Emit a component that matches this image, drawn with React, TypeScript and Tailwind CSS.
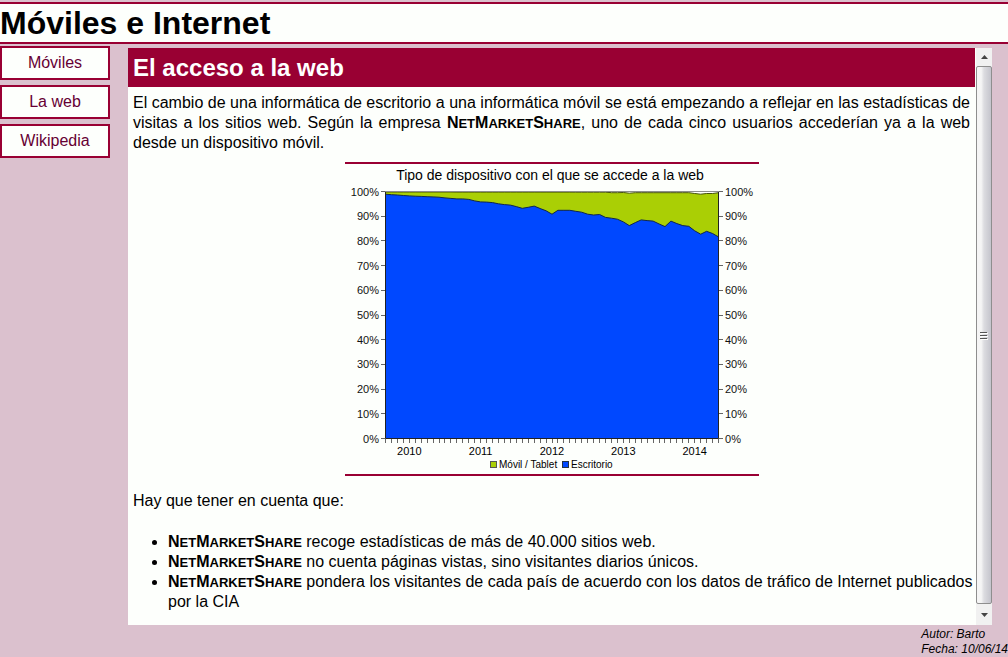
import type { ReactNode } from 'react';

const desktop = [
  98.9, 98.7, 98.6, 98.4, 98.2, 98.1, 98.0, 97.9, 97.8, 97.7, 97.4, 97.2, 97.0, 97.0, 96.8, 96.2, 95.8, 95.7, 95.5,
  95.0, 94.7, 94.5, 93.9, 93.2, 93.6, 94.1, 93.1, 92.2, 90.8, 92.4, 92.4, 92.4, 92.0, 91.6, 90.8, 90.5, 90.7, 89.5,
  89.2, 88.8, 87.7, 86.2, 87.4, 88.5, 88.2, 88.0, 86.9, 85.8, 88.0, 87.0, 86.2, 85.9, 84.1, 82.7, 83.9, 83.0, 81.6,
];
const total = desktop.map((_, i) => {
  if (i < 38) return 99.8 - i * 0.002;
  if (i === 40) return 99.6;
  if (i === 41) return 99.3;
  if (i < 52) return 99.5;
  return [99.2, 98.9, 99.2, 99.2, 99.5][i - 52];
});

const LEFT = 40.5;
const RIGHT = 373.5;
const TOP = 27.5;
const BOTTOM = 274.5;
const px = (i: number) => LEFT + (i * (RIGHT - LEFT)) / 56;
const py = (v: number) => BOTTOM - (v * (BOTTOM - TOP)) / 100;
const line = (values: number[]) => values.map((v, i) => `${px(i).toFixed(1)},${py(v).toFixed(1)}`).join(' ');
const area = (values: number[]) => `${LEFT},${BOTTOM} ${line(values)} ${RIGHT},${BOTTOM}`;

function Chart() {
  const percents = [0, 10, 20, 30, 40, 50, 60, 70, 80, 90, 100];
  return (
    <svg
      viewBox="0 0 414 310"
      className="block h-auto w-full font-['Liberation_Sans',Arial,sans-serif]"
      role="img"
      aria-label="Tipo de dispositivo con el que se accede a la web"
    >
      <text x="205" y="16" textAnchor="middle" fontSize="14">Tipo de dispositivo con el que se accede a la web</text>
      <polygon points={area(total)} fill="#aacf05" />
      <polygon points={area(desktop)} fill="#0048ff" />
      <polyline points={line(total)} fill="none" stroke="#45520a" strokeWidth="1" />
      <polyline points={line(desktop)} fill="none" stroke="#10264d" strokeWidth="1" />
      <path d={`M${LEFT} ${TOP}V${BOTTOM}H${RIGHT}V${TOP}`} fill="none" stroke="#222" />
      <path d={`M${LEFT} ${TOP}H${RIGHT}`} stroke="#8c8c8c" />
      {percents.map((p) => (
        <g key={p} fontSize="11" fill="#111">
          <path d={`M36 ${Math.floor(py(p)) + 0.5}H40M374 ${Math.floor(py(p)) + 0.5}H378`} stroke="#666" />
          <text x="34" y={py(p) + 4} textAnchor="end">{p}%</text>
          <text x="380" y={py(p) + 4}>{p}%</text>
        </g>
      ))}
      {desktop.map((_, i) => (
        <path key={i} d={`M${Math.floor(px(i)) + 0.5} 275V279`} stroke="#666" />
      ))}
      {[2010, 2011, 2012, 2013, 2014].map((year, i) => (
        <text key={year} x={px(4 + i * 12)} y="291" textAnchor="middle" fontSize="11">{year}</text>
      ))}
      <rect x="145.5" y="297.5" width="6" height="6" fill="#aacf05" stroke="#555" />
      <text x="154" y="304" fontSize="10">Móvil / Tablet</text>
      <rect x="217.5" y="297.5" width="6" height="6" fill="#0048ff" stroke="#234" />
      <text x="226" y="304" fontSize="10">Escritorio</text>
    </svg>
  );
}

function Brand() {
  const small = (t: string): ReactNode => <span className="text-[13px] leading-none">{t}</span>;
  return (
    <strong className="font-bold">
      N{small('ET')}M{small('ARKET')}S{small('HARE')}
    </strong>
  );
}

function ScrollBar() {
  return (
    <div className="ml-px flex w-4 shrink-0 flex-col bg-[#f1f1f1]">
      <button type="button" aria-label="Subir" className="flex h-[18px] items-center justify-center">
        <svg width="7" height="4" aria-hidden="true"><path d="M0 4L3.5 0L7 4Z" fill="#444" /></svg>
      </button>
      <div className="flex flex-1 items-center justify-center rounded-xs border border-[#8e8e8e] bg-linear-to-r from-[#f5f5f5] from-30% via-[#dcdce0] via-50% to-[#c4c4cc]">
        <svg width="8" height="9" aria-hidden="true">
          <path d="M0 1.5H7M0 4.5H7M0 7.5H7" stroke="#555" />
          <path d="M1 2.5H8M1 5.5H8M1 8.5H8" stroke="#fff" />
        </svg>
      </div>
      <button type="button" aria-label="Bajar" className="flex h-[21px] items-center justify-center">
        <svg width="7" height="4" aria-hidden="true"><path d="M0 0L3.5 4L7 0Z" fill="#444" /></svg>
      </button>
    </div>
  );
}

export default function App() {
  return (
    <div className="min-h-screen overflow-x-hidden bg-[#dbc1ce] pt-0.5 font-['Liberation_Sans',Arial,sans-serif] text-base leading-5 text-black">
      <header className="border-y-2 border-[#990033] bg-[#fdfffc]">
        <h1 className="text-[32px] leading-[38px] font-bold">Móviles e Internet</h1>
      </header>
      <div className="flex gap-[18px] pt-0.5 pr-4">
        <nav className="flex w-[110px] shrink-0 flex-col gap-[5px]">
          {['Móviles', 'La web', 'Wikipedia'].map((label) => (
            <a
              key={label}
              href="#contenido"
              className="border-2 border-[#990033] bg-[#fdfffc] py-[5px] text-center text-[#660033]"
            >
              {label}
            </a>
          ))}
        </nav>
        <main id="contenido" className="mt-0.5 flex min-w-0 flex-1 bg-[#fdfffc]">
          <article className="min-w-0 flex-1 pb-[13px]">
            <h2 className="bg-[#990033] px-[5px] pt-[6px] pb-[5px] text-2xl leading-7 font-bold text-white">
              El acceso a la web
            </h2>
            <p className="px-[5px] pt-[6px] text-justify">
              El cambio de una informática de escritorio a una informática móvil se está empezando a reflejar en las
              estadísticas de visitas a los sitios web. Según la empresa <Brand />, uno de cada cinco usuarios accederían
              ya a la web desde un dispositivo móvil.
            </p>
            <figure className="mx-auto mt-[9px] w-[414px] max-w-full border-y-2 border-[#990033]">
              <Chart />
            </figure>
            <p className="px-[5px] pt-[15px]">Hay que tener en cuenta que:</p>
            <ul className="list-disc pt-[21px] pl-10">
              <li><Brand /> recoge estadísticas de más de 40.000 sitios web.</li>
              <li><Brand /> no cuenta páginas vistas, sino visitantes diarios únicos.</li>
              <li>
                <Brand /> pondera los visitantes de cada país de acuerdo con los datos de tráfico de Internet publicados
                por la CIA
              </li>
            </ul>
          </article>
          <ScrollBar />
        </main>
      </div>
      <footer className="flex justify-end pt-0.5">
        <address className="text-xs leading-[15px]">
          Autor: Barto
          <br />
          Fecha: 10/06/14
        </address>
      </footer>
    </div>
  );
}
